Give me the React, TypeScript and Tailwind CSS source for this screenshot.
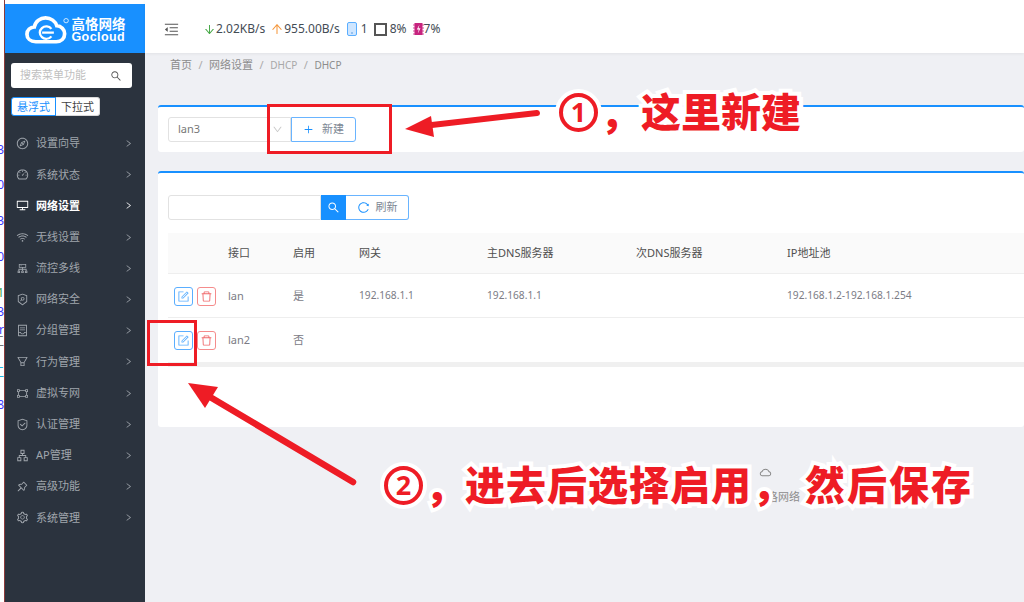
import type { ReactNode } from "react";
import {
  AiOutlineApartment,
  AiOutlineArrowDown,
  AiOutlineArrowUp,
  AiOutlineCloud,
  AiOutlineCluster,
  AiOutlineCompass,
  AiOutlineContainer,
  AiOutlineDashboard,
  AiOutlineDelete,
  AiOutlineDesktop,
  AiOutlineDown,
  AiOutlineFilter,
  AiOutlineForm,
  AiOutlineGateway,
  AiOutlineMenuFold,
  AiOutlinePlus,
  AiOutlinePushpin,
  AiOutlineReload,
  AiOutlineRight,
  AiOutlineSafety,
  AiOutlineSearch,
  AiOutlineSecurityScan,
  AiOutlineSetting,
  AiOutlineWifi,
} from "react-icons/ai";

const menu: { label: string; icon: ReactNode; active?: boolean }[] = [
  { label: "设置向导", icon: <AiOutlineCompass /> },
  { label: "系统状态", icon: <AiOutlineDashboard /> },
  { label: "网络设置", icon: <AiOutlineDesktop />, active: true },
  { label: "无线设置", icon: <AiOutlineWifi /> },
  { label: "流控多线", icon: <AiOutlineCluster /> },
  { label: "网络安全", icon: <AiOutlineSecurityScan /> },
  { label: "分组管理", icon: <AiOutlineContainer /> },
  { label: "行为管理", icon: <AiOutlineFilter /> },
  { label: "虚拟专网", icon: <AiOutlineGateway /> },
  { label: "认证管理", icon: <AiOutlineSafety /> },
  { label: "AP管理", icon: <AiOutlineApartment /> },
  { label: "高级功能", icon: <AiOutlinePushpin /> },
  { label: "系统管理", icon: <AiOutlineSetting /> },
];

// clipped characters of the window behind the screenshot
const strip = [
  { t: "3", c: "h-[35px] text-[#3b3bff]" },
  { t: "0", c: "h-[36px] text-[#3b3bff]" },
  { t: "3", c: "h-[36px] text-[#3b3bff]" },
  { t: "0", c: "h-[36px] text-[#3b3bff]" },
  { t: "1", c: "h-[19px] text-[#3fa34d]" },
  { t: "3", c: "h-[18px] text-[#3b3bff]" },
  { t: "r", c: "h-[12px] text-[#3b3bff]" },
  { t: "工", c: "h-[31px] text-[#777777]" },
  { t: "工", c: "h-[32px] text-[#22b8e6]" },
  { t: "8", c: "h-[20px] text-[#3b3bff]" },
];

function Logo() {
  return (
    <div className="flex h-[49px] items-center justify-center gap-[2px] bg-[#1890ff] text-white">
      <svg width="45" height="28" viewBox="0 0 46 30" preserveAspectRatio="none" className="mt-[3px]">
        <path
          d="M11 27.500C5.500 27.500 2 24 2 19.500S5.500 12 9.500 11.800C10.500 6 15.500 2 21 2c5.500 0 10 3.500 11.500 8.500C37 10.500 40.500 14.500 40.500 19c0 5-3.500 8.500-8.500 8.500H11Z"
          fill="none"
          stroke="white"
          strokeWidth="3.800"
        />
        <path d="M27 13.800a6.600 6.600 0 1 0 0 8" fill="none" stroke="white" strokeWidth="2.400" />
        <path d="M17.500 17.800h12" stroke="white" strokeWidth="2.400" />
        <circle cx="42" cy="5" r="2.300" fill="none" stroke="white" strokeWidth="0.800" />
      </svg>
      <div className="mt-[3px] flex flex-col items-start font-bold leading-none">
        <span className="text-[13.500px] leading-[14px]">高恪网络</span>
        <span className="font-['Liberation_Sans',sans-serif] text-[12.500px] leading-[12px] tracking-[0.400px]">
          Gocloud
        </span>
      </div>
    </div>
  );
}

function Sidebar() {
  return (
    <aside className="flex w-[140px] shrink-0 flex-col bg-[#2b333e]">
      <div className="h-[4px] bg-white" />
      <Logo />
      <div className="mx-[6px] mt-[10px] flex h-[25px] w-[121px] items-center justify-between rounded-[3px] bg-white pl-[9px] pr-[10px]">
        <span className="text-[11px] text-[#bfbfbf]">搜索菜单功能</span>
        <AiOutlineSearch className="text-[12px] text-[#555555]" />
      </div>
      <div className="mx-[6px] mt-[9px] flex h-[19px] w-[89px] text-[11px] leading-none">
        <span className="flex w-[45px] items-center justify-center rounded-l-[3px] border border-[#1890ff] bg-white text-[#1890ff]">
          悬浮式
        </span>
        <span className="flex w-[44px] items-center justify-center rounded-r-[3px] border border-l-0 border-[#d9d9d9] bg-white text-[#444444]">
          下拉式
        </span>
      </div>
      <nav className="mt-[12px] flex flex-col">
        {menu.map((item) => (
          <div
            key={item.label}
            className={`flex h-[31.200px] items-center pl-[11px] pr-[12px] text-[11px] ${
              item.active ? "font-bold text-white" : "text-[#a0a6ad]"
            }`}
          >
            <span className="flex w-[20px] text-[13px]">{item.icon}</span>
            <span className="flex-1">{item.label}</span>
            <AiOutlineRight className="-ml-1 text-[9px]" />
          </div>
        ))}
      </nav>
    </aside>
  );
}

function TopBar() {
  return (
    <header className="flex h-[53px] shrink-0 items-center bg-white pl-[18px] pt-[5px] text-[12px] text-[#444c55] shadow-[0_1px_3px_rgba(0,0,0,0.06)]">
      <AiOutlineMenuFold className="text-[17px] text-[#555555]" />
      <div className="ml-[23px] flex items-center">
        <AiOutlineArrowDown className="text-[13px] text-[#45a845]" />
        <span>2.02KB/s</span>
        <AiOutlineArrowUp className="ml-[5px] text-[14px] text-[#f5973c]" />
        <span>955.00B/s</span>
        <svg width="10" height="14" viewBox="0 0 10 14" className="ml-[7px]">
          <rect x="0.500" y="0.500" width="9" height="13" rx="1.500" fill="#cfe6ff" stroke="#5aaeff" />
          <circle cx="5" cy="11" r="0.700" fill="#2a7fd8" />
        </svg>
        <span className="ml-[4px]">1</span>
        <svg width="13" height="13" viewBox="0 0 13 13" className="ml-[6px]">
          <rect x="1" y="1" width="11" height="11" fill="none" stroke="#555555" strokeWidth="2" />
        </svg>
        <span className="ml-[3px]">8%</span>
        <svg width="11" height="14" viewBox="0 0 11 14" className="ml-[6px]">
          <rect x="1.500" y="1" width="8" height="12" fill="#c7247f" />
          <path d="M0 3h11M0 6h11M0 9h11M0 12h11" stroke="#c7247f" strokeWidth="0.800" />
          <path d="M6.500 2.500 3.800 7.500h2L4.800 11.500 7.500 6.300h-2z" fill="#ffffff" />
        </svg>
        <span>7%</span>
      </div>
    </header>
  );
}

function Breadcrumb() {
  return (
    <div className="flex h-[24px] items-center pl-[25px] text-[11px] text-[#8c8c8c]">
      <span>首页</span>
      <span className="mx-[6.500px] text-[#aaaaaa]">/</span>
      <span>网络设置</span>
      <span className="mx-[6.500px] text-[#aaaaaa]">/</span>
      <span className="text-[10px] text-[#a8a8a8]">DHCP</span>
      <span className="mx-[6.500px] text-[#aaaaaa]">/</span>
      <span className="text-[10px]">DHCP</span>
    </div>
  );
}

function CreateCard() {
  return (
    <section className="mt-[28px] flex h-[47px] items-start rounded-[3px] border-t-2 border-[#1890ff] bg-white pl-[10px] pt-[10px] text-[11px] text-[#777777]">
      <div className="flex h-[25px] w-[123px] items-center justify-between rounded-l-[3px] border border-[#e2e2e2] pl-[9px] pr-[7px]">
        <span>lan3</span>
        <AiOutlineDown className="text-[11px] text-[#c9c9c9]" />
      </div>
      <button className="flex h-[25px] w-[65px] items-center justify-center gap-[8px] rounded-r-[3px] border border-[#69b4ff] bg-white text-[#7d8794]">
        <AiOutlinePlus className="text-[11px] text-[#1890ff]" />
        新建
      </button>
    </section>
  );
}

const cols = "grid grid-cols-[60px_65px_66px_128px_149px_151px_1fr] items-center";

function ActionButtons() {
  return (
    <div className="flex gap-[4px] pl-[6px]">
      <button className="flex h-[19px] w-[19px] items-center justify-center rounded-[3px] border border-[#5aaeff] text-[13px] text-[#5aaeff]">
        <AiOutlineForm />
      </button>
      <button className="flex h-[19px] w-[19px] items-center justify-center rounded-[3px] border border-[#f58c8c] text-[13px] text-[#f0696b]">
        <AiOutlineDelete />
      </button>
    </div>
  );
}

function DhcpTable() {
  return (
    <div className="mt-[13px]">
      <div className={`${cols} h-[41px] border-b border-[#eeeeee] bg-[#fafafa] pt-[1px] text-[11px] text-[#4f4f4f]`}>
        <span />
        <span>接口</span>
        <span>启用</span>
        <span>网关</span>
        <span>主DNS服务器</span>
        <span>次DNS服务器</span>
        <span>IP地址池</span>
      </div>
      <div className={`${cols} h-[44px] border-b border-[#eeeeee] pt-[1px] text-[11px] text-[#7b7b85]`}>
        <ActionButtons />
        <span>lan</span>
        <span>是</span>
        <span className="text-[10.200px]">192.168.1.1</span>
        <span className="text-[10.200px]">192.168.1.1</span>
        <span />
        <span className="text-[10.200px]">192.168.1.2-192.168.1.254</span>
      </div>
      <div className={`${cols} h-[49px] border-b-[5px] border-[#f0f0f0] text-[11px] text-[#7b7b85]`}>
        <ActionButtons />
        <span>lan2</span>
        <span>否</span>
      </div>
    </div>
  );
}

function ListCard() {
  return (
    <section className="mt-[19px] h-[256px] rounded-[3px] border-t-2 border-[#1890ff] bg-white pl-[10px] pt-[22px]">
      <div className="flex h-[25px] text-[11px]">
        <div className="w-[153px] rounded-l-[3px] border border-[#e2e2e2]" />
        <button className="flex w-[25px] items-center justify-center bg-[#1890ff] text-[13px] text-white">
          <AiOutlineSearch />
        </button>
        <button className="flex w-[63px] items-center justify-center gap-[6px] rounded-r-[3px] border border-l-0 border-[#69b4ff] text-[#7d8794]">
          <AiOutlineReload className="text-[13px] text-[#1890ff]" />
          刷新
        </button>
      </div>
      <DhcpTable />
    </section>
  );
}

function NumberBadge({ n, className }: { n: string; className: string }) {
  return (
    <div
      className={`absolute flex h-[39px] w-[39px] items-center justify-center rounded-full border-[4px] border-[#ee1c25] bg-white text-[27px] font-bold text-[#ee1c25] shadow-[0_0_0_4px_white] ${className}`}
    >
      {n}
    </div>
  );
}

function Annotations() {
  const callout =
    "absolute whitespace-nowrap text-[40px] font-black leading-none text-[#ee1c25] [-webkit-text-stroke:8px_white] [paint-order:stroke_fill]";
  return (
    <>
      <div className="absolute left-[267px] top-[104px] h-[50px] w-[125px] border-[3px] border-[#ee1c25]" />
      <div className="absolute left-[147px] top-[320px] h-[46px] w-[50px] border-[3px] border-[#ee1c25]" />
      <svg className="absolute left-0 top-0" width="1024" height="602" viewBox="0 0 1024 602">
        <path d="M423 126 L537 113" stroke="#ee1c25" strokeWidth="6" strokeLinecap="round" />
        <path d="M405 129 L431 116 L434 137 Z" fill="#ee1c25" />
        <path d="M205 394 L353 482" stroke="#ee1c25" strokeWidth="6.500" strokeLinecap="round" />
        <path d="M188 383 L218 387 L205 408 Z" fill="#ee1c25" />
      </svg>
      <div className={`${callout} left-[600px] top-[93px] w-[41px] overflow-visible`}>，</div>
      <NumberBadge n="1" className="left-[559px] top-[93px]" />
      <div className={`${callout} left-[641px] top-[92px]`}>这里新建</div>
      <div className={`${callout} left-[425px] top-[466px]`}>，</div>
      <NumberBadge n="2" className="left-[384px] top-[466px]" />
      <div className={`${callout} left-[465px] top-[465px] tracking-[1px]`}>进去后选择启用，</div>
      <div className={`${callout} left-[805px] top-[465px] tracking-[2px]`}>然后保存</div>
    </>
  );
}

export default function App() {
  return (
    <div className="relative flex h-[602px] w-[1024px] overflow-hidden bg-[#eff0f4] font-['Noto_Sans','Noto_Sans_CJK_SC',sans-serif]">
      <div className="flex w-[5px] shrink-0 flex-col items-end overflow-hidden border-r border-[#8c3a3a] bg-white pt-[140px]">
        {strip.map((s, i) => (
          <span key={i} className={`shrink-0 text-[12px] leading-[20px] ${s.c}`}>
            {s.t}
          </span>
        ))}
      </div>
      <Sidebar />
      <main className="min-w-0 flex-1">
        <TopBar />
        <Breadcrumb />
        <div className="pl-[13px]">
          <CreateCard />
          <ListCard />
        </div>
      </main>
      <AiOutlineCloud className="absolute left-[759px] top-[466px] text-[13px] text-[#888888]" />
      <span className="absolute left-[756px] top-[489px] text-[11px] text-[#8c8c8c]">高恪网络</span>
      <Annotations />
    </div>
  );
}
